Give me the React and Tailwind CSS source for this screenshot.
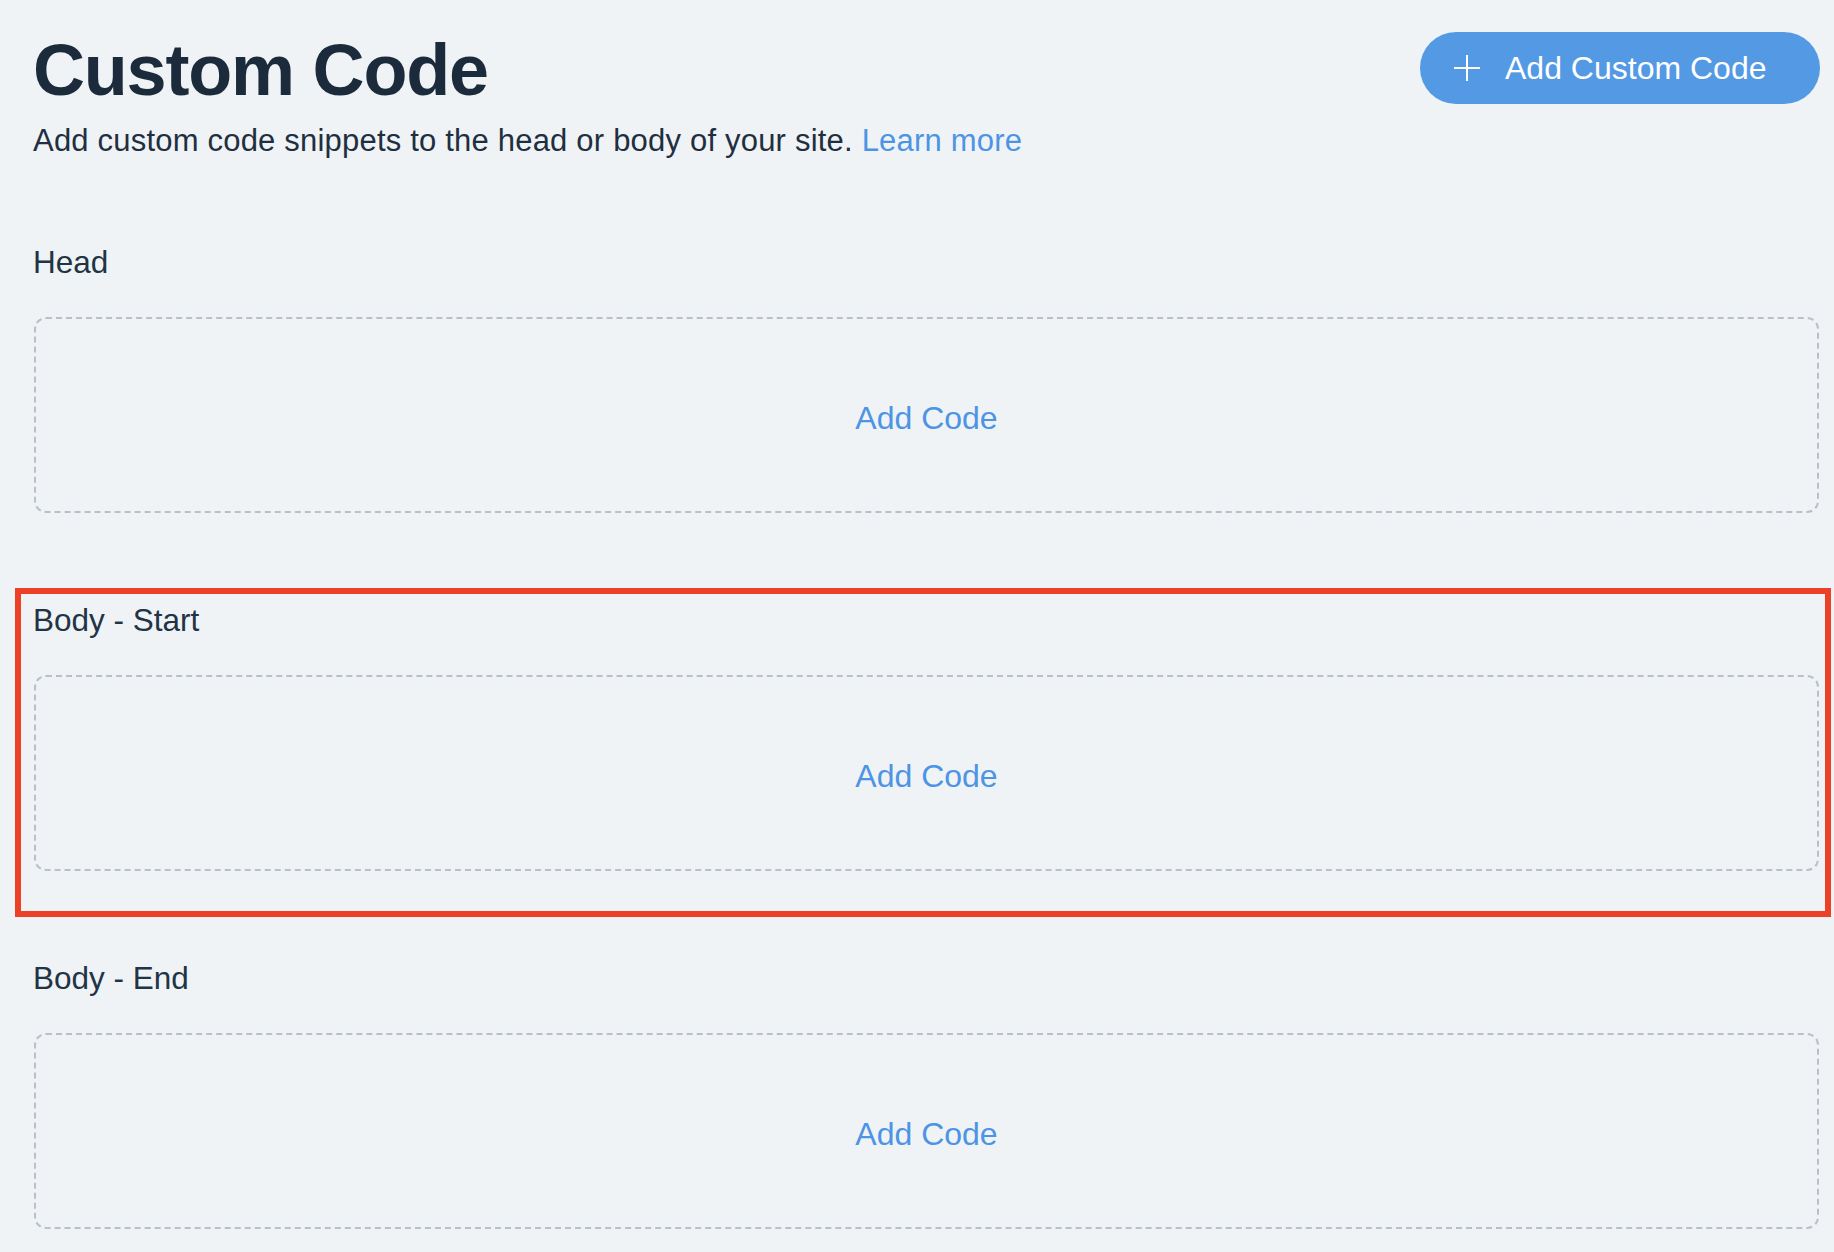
const SECTIONS = [
  { id: 'head', label: 'Head' },
  { id: 'body-start', label: 'Body - Start', highlighted: true },
  { id: 'body-end', label: 'Body - End' },
];

function PlusIcon() {
  return (
    <svg width="26" height="26" viewBox="0 0 26 26" fill="none" stroke="currentColor" strokeWidth="2">
      <path d="M13 0v26M0 13h26" />
    </svg>
  );
}

function CodeSection({ label, highlighted }) {
  return (
    <section className="relative">
      {highlighted && (
        <div className="pointer-events-none absolute -left-[18px] -right-[12px] -top-[12px] -bottom-[46px] border-[6px] border-[#ec4027]" />
      )}
      <h2 className="text-[31.5px] leading-[40px] text-[#223345]">{label}</h2>
      <button
        type="button"
        className="mt-[35px] ml-[1px] flex h-[196px] w-[calc(100%-1px)] items-center justify-center rounded-xl border-2 border-dashed border-[#bac0ca] pt-[5px] text-[32px] text-[#4d94e4]"
      >
        Add Code
      </button>
    </section>
  );
}

export default function App() {
  return (
    <div className="min-h-screen bg-[#eff3f6] pl-[33px] pr-[15px] pt-[32px] pb-[23px] font-['Liberation_Sans',Arial,sans-serif]">
      <header className="flex items-start justify-between">
        <div>
          <h1 className="mt-[2px] text-[72px] font-bold leading-[72px] tracking-[-1.2px] text-[#1c2b3b]">Custom Code</h1>
          <p className="mt-[15px] text-[31px] leading-[40px] tracking-[0.2px] text-[#1f2f3f]">
            Add custom code snippets to the head or body of your site.{' '}
            <a href="#" className="text-[#4d94e4]">Learn more</a>
          </p>
        </div>
        <button
          type="button"
          className="mr-[-1px] flex h-[72px] w-[400px] items-center gap-[25px] rounded-full bg-[#5399e4] pl-[34px] text-[32px] text-white"
        >
          <PlusIcon />
          Add Custom Code
        </button>
      </header>

      <div className="mt-[81px] flex flex-col gap-[87px]">
        {SECTIONS.map((s) => (
          <CodeSection key={s.id} label={s.label} highlighted={s.highlighted} />
        ))}
      </div>
    </div>
  );
}
